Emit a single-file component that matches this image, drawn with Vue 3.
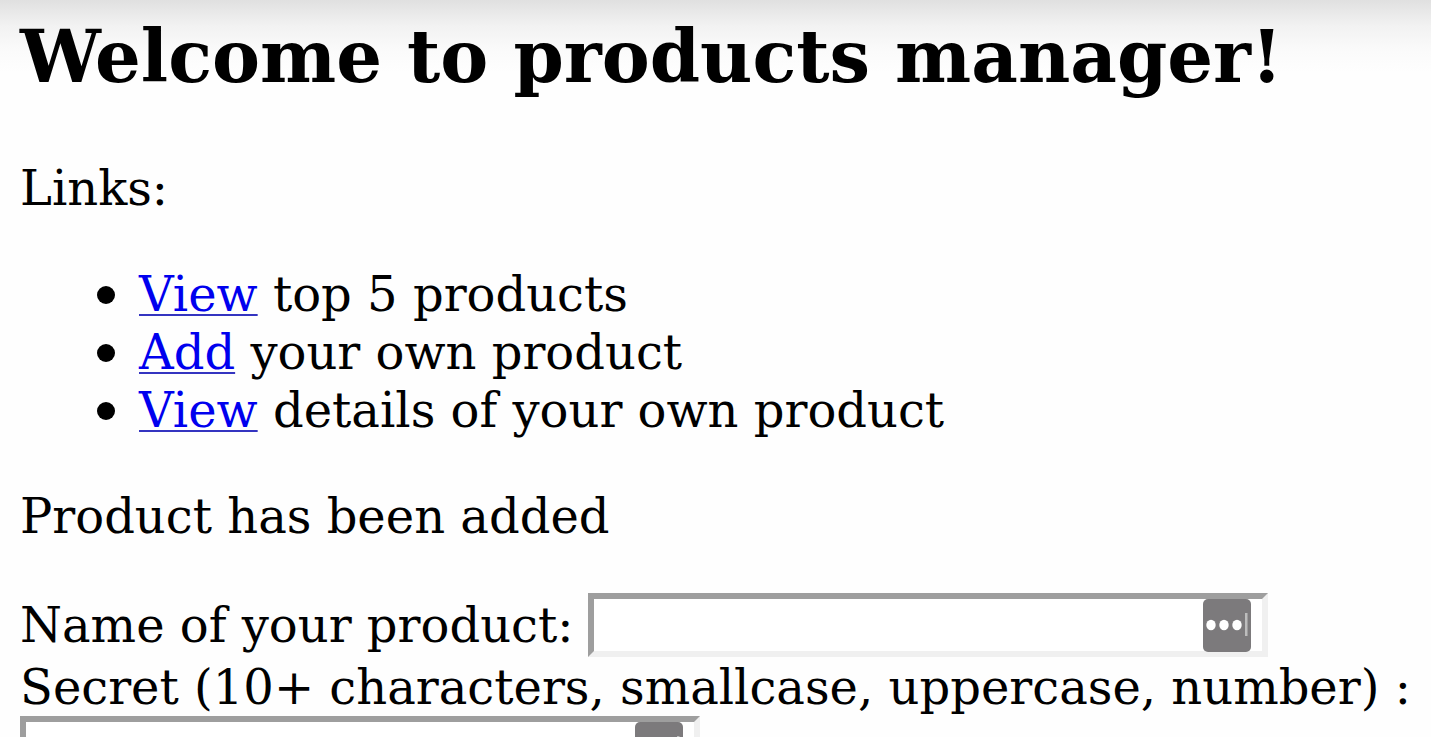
<script setup>
const links = [
  { label: 'View', rest: 'top 5 products' },
  { label: 'Add', rest: 'your own product' },
  { label: 'View', rest: 'details of your own product' },
]
const fields = [
  { id: 'name', label: 'Name of your product:', type: 'text' },
  { id: 'secret', label: 'Secret (10+ characters, smallcase, uppercase, number) :', type: 'password' },
]
</script>

<template>
  <main class="page">
    <h1>Welcome to products manager!</h1>
    <p>Links:</p>
    <ul>
      <li v-for="(link, i) in links" :key="i">
        <span><a href="#">{{ link.label }}</a> {{ link.rest }}</span>
      </li>
    </ul>
    <p>Product has been added</p>
    <form @submit.prevent>
      <div v-for="field in fields" :key="field.id" class="row">
        <label :for="field.id">{{ field.label }}</label>
        <span class="box">
          <input :id="field.id" :type="field.type" />
          <button type="button" class="fill" aria-label="Fill in">
            <svg viewBox="0 0 48 53" width="48" height="53" aria-hidden="true">
              <rect width="48" height="53" rx="5" fill="#7c7a7c" />
              <ellipse cx="8" cy="26" rx="4.7" ry="5.3" fill="#fff" />
              <ellipse cx="21" cy="26" rx="4.7" ry="5.3" fill="#fff" />
              <ellipse cx="34" cy="26" rx="4.7" ry="5.3" fill="#fff" />
              <rect x="42" y="14" width="2.5" height="23" fill="#bdbdbd" />
            </svg>
          </button>
        </span>
      </div>
    </form>
  </main>
</template>

<style>
html {
  overflow: hidden;
}
</style>

<style scoped>
.page {
  box-sizing: border-box;
  height: 100vh;
  overflow: hidden;
  padding: 13px 20px 0;
  background: linear-gradient(#e0e0e0, #f2f2f2 26px, #fbfbfb 52px, #fefefe 72px);
  color: #000;
  font: 48px/58px "DejaVu Serif", serif;
}
h1 {
  margin: 0 0 58px;
  font-size: 72px;
  line-height: 88px;
  font-weight: bold;
}
p {
  margin: 0 0 48px;
}
ul {
  margin: 0 0 48px;
  padding-left: 77px;
  list-style: none;
}
li {
  display: flex;
  align-items: center;
  gap: 24px;
}
li::before {
  content: "";
  flex: none;
  width: 18px;
  height: 18px;
  margin-top: 2px;
  border-radius: 50%;
  background: #000;
}
a {
  color: #0000ee;
  text-decoration: underline #3434c0 2px;
  text-underline-offset: 3px;
}
form {
  display: grid;
  gap: 1px;
}
.row {
  display: flex;
  flex-wrap: wrap;
  align-items: center;
  column-gap: 15px;
}
.row label {
  white-space: nowrap;
}
.box {
  position: relative;
  display: block;
  width: 680px;
  height: 64px;
}
input {
  box-sizing: border-box;
  width: 100%;
  height: 100%;
  display: block;
  border: 6px solid;
  border-color: #9e9e9e #f0f0f0 #f0f0f0 #9e9e9e;
  background: #fff;
  font: inherit;
  outline: 0;
}
.fill {
  position: absolute;
  top: 6px;
  right: 17px;
  padding: 0;
  border: 0;
  background: none;
}
.fill svg {
  display: block;
}
</style>
